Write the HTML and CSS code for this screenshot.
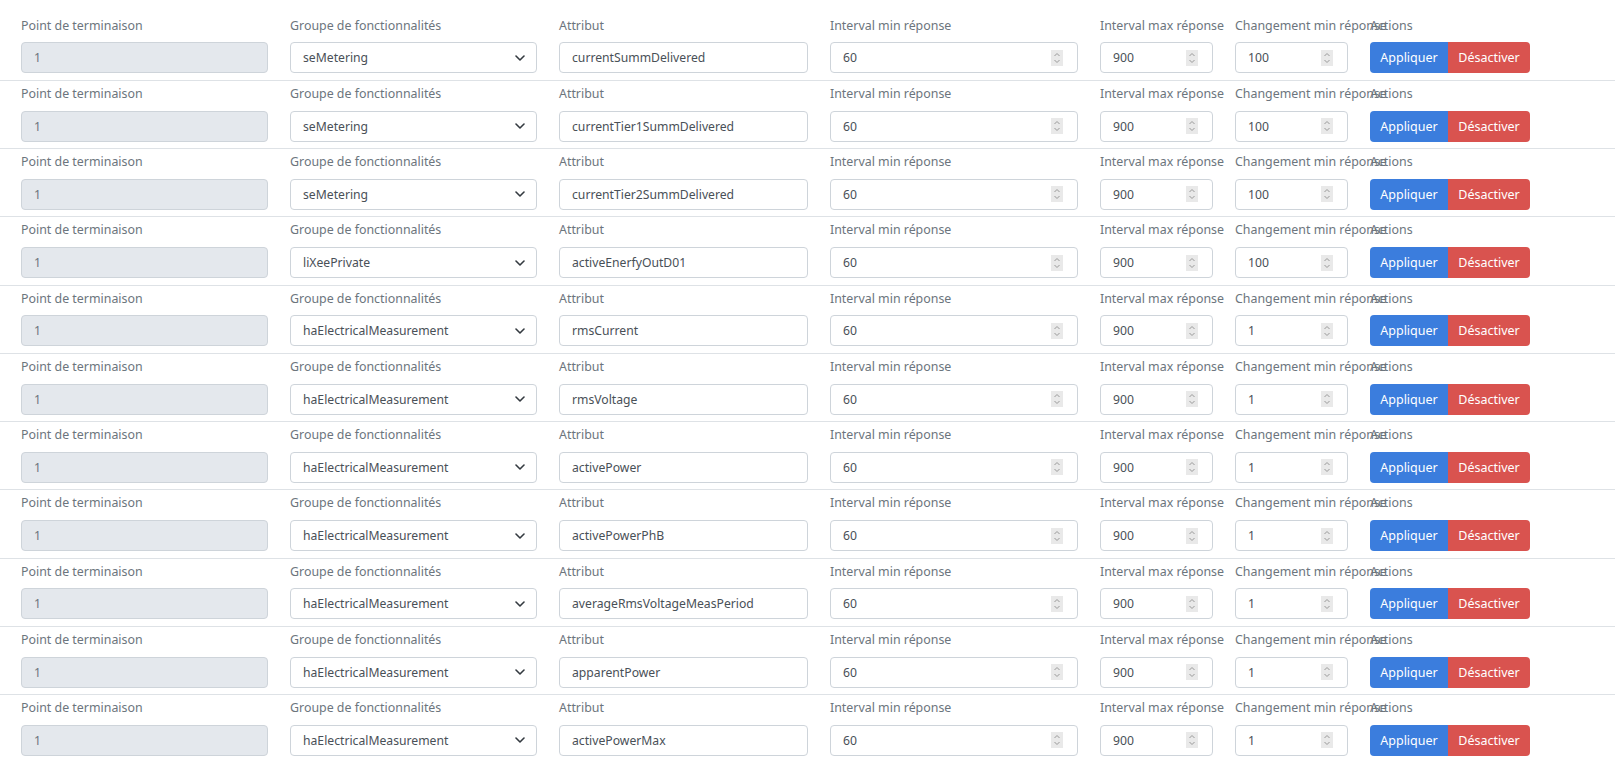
FILE: index.html
```html
<!DOCTYPE html>
<html lang="fr">
<head>
<meta charset="utf-8">
<title>Reporting</title>
<link rel="stylesheet" href="styles.css">
</head>
<body>
<div class="list">

<div class="rep-row">
  <div class="field"><div class="lbl">Point de terminaison</div><div class="ctl disabled">1</div></div>
  <div class="field"><div class="lbl">Groupe de fonctionnalités</div><div class="ctl sel"><span>seMetering</span><svg class="chev" width="10" height="6" viewBox="0 0 10 6"><path d="M1 1 L5 5 L9 1" fill="none" stroke="#343a40" stroke-width="1.6" stroke-linecap="round" stroke-linejoin="round"/></svg></div></div>
  <div class="field"><div class="lbl">Attribut</div><div class="ctl">currentSummDelivered</div></div>
  <div class="field"><div class="lbl">Interval min réponse</div><div class="ctl num"><span>60</span><svg class="spin" width="12" height="16" viewBox="0 0 12 16"><rect width="12" height="16" fill="#e9e9e9"/><path d="M3.5 6 L6 3.5 L8.5 6 M3.5 10 L6 12.5 L8.5 10" fill="none" stroke="#999" stroke-width="1"/></svg></div></div>
  <div class="field"><div class="lbl">Interval max réponse</div><div class="ctl num"><span>900</span><svg class="spin" width="12" height="16" viewBox="0 0 12 16"><rect width="12" height="16" fill="#e9e9e9"/><path d="M3.5 6 L6 3.5 L8.5 6 M3.5 10 L6 12.5 L8.5 10" fill="none" stroke="#999" stroke-width="1"/></svg></div></div>
  <div class="field"><div class="lbl">Changement min réponse</div><div class="ctl num"><span>100</span><svg class="spin" width="12" height="16" viewBox="0 0 12 16"><rect width="12" height="16" fill="#e9e9e9"/><path d="M3.5 6 L6 3.5 L8.5 6 M3.5 10 L6 12.5 L8.5 10" fill="none" stroke="#999" stroke-width="1"/></svg></div></div>
  <div class="field"><div class="lbl">Actions</div><div class="btns"><span class="btn apply">Appliquer</span><span class="btn off">Désactiver</span></div></div>
</div>

<div class="rep-row">
  <div class="field"><div class="lbl">Point de terminaison</div><div class="ctl disabled">1</div></div>
  <div class="field"><div class="lbl">Groupe de fonctionnalités</div><div class="ctl sel"><span>seMetering</span><svg class="chev" width="10" height="6" viewBox="0 0 10 6"><path d="M1 1 L5 5 L9 1" fill="none" stroke="#343a40" stroke-width="1.6" stroke-linecap="round" stroke-linejoin="round"/></svg></div></div>
  <div class="field"><div class="lbl">Attribut</div><div class="ctl">currentTier1SummDelivered</div></div>
  <div class="field"><div class="lbl">Interval min réponse</div><div class="ctl num"><span>60</span><svg class="spin" width="12" height="16" viewBox="0 0 12 16"><rect width="12" height="16" fill="#e9e9e9"/><path d="M3.5 6 L6 3.5 L8.5 6 M3.5 10 L6 12.5 L8.5 10" fill="none" stroke="#999" stroke-width="1"/></svg></div></div>
  <div class="field"><div class="lbl">Interval max réponse</div><div class="ctl num"><span>900</span><svg class="spin" width="12" height="16" viewBox="0 0 12 16"><rect width="12" height="16" fill="#e9e9e9"/><path d="M3.5 6 L6 3.5 L8.5 6 M3.5 10 L6 12.5 L8.5 10" fill="none" stroke="#999" stroke-width="1"/></svg></div></div>
  <div class="field"><div class="lbl">Changement min réponse</div><div class="ctl num"><span>100</span><svg class="spin" width="12" height="16" viewBox="0 0 12 16"><rect width="12" height="16" fill="#e9e9e9"/><path d="M3.5 6 L6 3.5 L8.5 6 M3.5 10 L6 12.5 L8.5 10" fill="none" stroke="#999" stroke-width="1"/></svg></div></div>
  <div class="field"><div class="lbl">Actions</div><div class="btns"><span class="btn apply">Appliquer</span><span class="btn off">Désactiver</span></div></div>
</div>

<div class="rep-row">
  <div class="field"><div class="lbl">Point de terminaison</div><div class="ctl disabled">1</div></div>
  <div class="field"><div class="lbl">Groupe de fonctionnalités</div><div class="ctl sel"><span>seMetering</span><svg class="chev" width="10" height="6" viewBox="0 0 10 6"><path d="M1 1 L5 5 L9 1" fill="none" stroke="#343a40" stroke-width="1.6" stroke-linecap="round" stroke-linejoin="round"/></svg></div></div>
  <div class="field"><div class="lbl">Attribut</div><div class="ctl">currentTier2SummDelivered</div></div>
  <div class="field"><div class="lbl">Interval min réponse</div><div class="ctl num"><span>60</span><svg class="spin" width="12" height="16" viewBox="0 0 12 16"><rect width="12" height="16" fill="#e9e9e9"/><path d="M3.5 6 L6 3.5 L8.5 6 M3.5 10 L6 12.5 L8.5 10" fill="none" stroke="#999" stroke-width="1"/></svg></div></div>
  <div class="field"><div class="lbl">Interval max réponse</div><div class="ctl num"><span>900</span><svg class="spin" width="12" height="16" viewBox="0 0 12 16"><rect width="12" height="16" fill="#e9e9e9"/><path d="M3.5 6 L6 3.5 L8.5 6 M3.5 10 L6 12.5 L8.5 10" fill="none" stroke="#999" stroke-width="1"/></svg></div></div>
  <div class="field"><div class="lbl">Changement min réponse</div><div class="ctl num"><span>100</span><svg class="spin" width="12" height="16" viewBox="0 0 12 16"><rect width="12" height="16" fill="#e9e9e9"/><path d="M3.5 6 L6 3.5 L8.5 6 M3.5 10 L6 12.5 L8.5 10" fill="none" stroke="#999" stroke-width="1"/></svg></div></div>
  <div class="field"><div class="lbl">Actions</div><div class="btns"><span class="btn apply">Appliquer</span><span class="btn off">Désactiver</span></div></div>
</div>

<div class="rep-row">
  <div class="field"><div class="lbl">Point de terminaison</div><div class="ctl disabled">1</div></div>
  <div class="field"><div class="lbl">Groupe de fonctionnalités</div><div class="ctl sel"><span>liXeePrivate</span><svg class="chev" width="10" height="6" viewBox="0 0 10 6"><path d="M1 1 L5 5 L9 1" fill="none" stroke="#343a40" stroke-width="1.6" stroke-linecap="round" stroke-linejoin="round"/></svg></div></div>
  <div class="field"><div class="lbl">Attribut</div><div class="ctl">activeEnerfyOutD01</div></div>
  <div class="field"><div class="lbl">Interval min réponse</div><div class="ctl num"><span>60</span><svg class="spin" width="12" height="16" viewBox="0 0 12 16"><rect width="12" height="16" fill="#e9e9e9"/><path d="M3.5 6 L6 3.5 L8.5 6 M3.5 10 L6 12.5 L8.5 10" fill="none" stroke="#999" stroke-width="1"/></svg></div></div>
  <div class="field"><div class="lbl">Interval max réponse</div><div class="ctl num"><span>900</span><svg class="spin" width="12" height="16" viewBox="0 0 12 16"><rect width="12" height="16" fill="#e9e9e9"/><path d="M3.5 6 L6 3.5 L8.5 6 M3.5 10 L6 12.5 L8.5 10" fill="none" stroke="#999" stroke-width="1"/></svg></div></div>
  <div class="field"><div class="lbl">Changement min réponse</div><div class="ctl num"><span>100</span><svg class="spin" width="12" height="16" viewBox="0 0 12 16"><rect width="12" height="16" fill="#e9e9e9"/><path d="M3.5 6 L6 3.5 L8.5 6 M3.5 10 L6 12.5 L8.5 10" fill="none" stroke="#999" stroke-width="1"/></svg></div></div>
  <div class="field"><div class="lbl">Actions</div><div class="btns"><span class="btn apply">Appliquer</span><span class="btn off">Désactiver</span></div></div>
</div>

<div class="rep-row">
  <div class="field"><div class="lbl">Point de terminaison</div><div class="ctl disabled">1</div></div>
  <div class="field"><div class="lbl">Groupe de fonctionnalités</div><div class="ctl sel"><span>haElectricalMeasurement</span><svg class="chev" width="10" height="6" viewBox="0 0 10 6"><path d="M1 1 L5 5 L9 1" fill="none" stroke="#343a40" stroke-width="1.6" stroke-linecap="round" stroke-linejoin="round"/></svg></div></div>
  <div class="field"><div class="lbl">Attribut</div><div class="ctl">rmsCurrent</div></div>
  <div class="field"><div class="lbl">Interval min réponse</div><div class="ctl num"><span>60</span><svg class="spin" width="12" height="16" viewBox="0 0 12 16"><rect width="12" height="16" fill="#e9e9e9"/><path d="M3.5 6 L6 3.5 L8.5 6 M3.5 10 L6 12.5 L8.5 10" fill="none" stroke="#999" stroke-width="1"/></svg></div></div>
  <div class="field"><div class="lbl">Interval max réponse</div><div class="ctl num"><span>900</span><svg class="spin" width="12" height="16" viewBox="0 0 12 16"><rect width="12" height="16" fill="#e9e9e9"/><path d="M3.5 6 L6 3.5 L8.5 6 M3.5 10 L6 12.5 L8.5 10" fill="none" stroke="#999" stroke-width="1"/></svg></div></div>
  <div class="field"><div class="lbl">Changement min réponse</div><div class="ctl num"><span>1</span><svg class="spin" width="12" height="16" viewBox="0 0 12 16"><rect width="12" height="16" fill="#e9e9e9"/><path d="M3.5 6 L6 3.5 L8.5 6 M3.5 10 L6 12.5 L8.5 10" fill="none" stroke="#999" stroke-width="1"/></svg></div></div>
  <div class="field"><div class="lbl">Actions</div><div class="btns"><span class="btn apply">Appliquer</span><span class="btn off">Désactiver</span></div></div>
</div>

<div class="rep-row">
  <div class="field"><div class="lbl">Point de terminaison</div><div class="ctl disabled">1</div></div>
  <div class="field"><div class="lbl">Groupe de fonctionnalités</div><div class="ctl sel"><span>haElectricalMeasurement</span><svg class="chev" width="10" height="6" viewBox="0 0 10 6"><path d="M1 1 L5 5 L9 1" fill="none" stroke="#343a40" stroke-width="1.6" stroke-linecap="round" stroke-linejoin="round"/></svg></div></div>
  <div class="field"><div class="lbl">Attribut</div><div class="ctl">rmsVoltage</div></div>
  <div class="field"><div class="lbl">Interval min réponse</div><div class="ctl num"><span>60</span><svg class="spin" width="12" height="16" viewBox="0 0 12 16"><rect width="12" height="16" fill="#e9e9e9"/><path d="M3.5 6 L6 3.5 L8.5 6 M3.5 10 L6 12.5 L8.5 10" fill="none" stroke="#999" stroke-width="1"/></svg></div></div>
  <div class="field"><div class="lbl">Interval max réponse</div><div class="ctl num"><span>900</span><svg class="spin" width="12" height="16" viewBox="0 0 12 16"><rect width="12" height="16" fill="#e9e9e9"/><path d="M3.5 6 L6 3.5 L8.5 6 M3.5 10 L6 12.5 L8.5 10" fill="none" stroke="#999" stroke-width="1"/></svg></div></div>
  <div class="field"><div class="lbl">Changement min réponse</div><div class="ctl num"><span>1</span><svg class="spin" width="12" height="16" viewBox="0 0 12 16"><rect width="12" height="16" fill="#e9e9e9"/><path d="M3.5 6 L6 3.5 L8.5 6 M3.5 10 L6 12.5 L8.5 10" fill="none" stroke="#999" stroke-width="1"/></svg></div></div>
  <div class="field"><div class="lbl">Actions</div><div class="btns"><span class="btn apply">Appliquer</span><span class="btn off">Désactiver</span></div></div>
</div>

<div class="rep-row">
  <div class="field"><div class="lbl">Point de terminaison</div><div class="ctl disabled">1</div></div>
  <div class="field"><div class="lbl">Groupe de fonctionnalités</div><div class="ctl sel"><span>haElectricalMeasurement</span><svg class="chev" width="10" height="6" viewBox="0 0 10 6"><path d="M1 1 L5 5 L9 1" fill="none" stroke="#343a40" stroke-width="1.6" stroke-linecap="round" stroke-linejoin="round"/></svg></div></div>
  <div class="field"><div class="lbl">Attribut</div><div class="ctl">activePower</div></div>
  <div class="field"><div class="lbl">Interval min réponse</div><div class="ctl num"><span>60</span><svg class="spin" width="12" height="16" viewBox="0 0 12 16"><rect width="12" height="16" fill="#e9e9e9"/><path d="M3.5 6 L6 3.5 L8.5 6 M3.5 10 L6 12.5 L8.5 10" fill="none" stroke="#999" stroke-width="1"/></svg></div></div>
  <div class="field"><div class="lbl">Interval max réponse</div><div class="ctl num"><span>900</span><svg class="spin" width="12" height="16" viewBox="0 0 12 16"><rect width="12" height="16" fill="#e9e9e9"/><path d="M3.5 6 L6 3.5 L8.5 6 M3.5 10 L6 12.5 L8.5 10" fill="none" stroke="#999" stroke-width="1"/></svg></div></div>
  <div class="field"><div class="lbl">Changement min réponse</div><div class="ctl num"><span>1</span><svg class="spin" width="12" height="16" viewBox="0 0 12 16"><rect width="12" height="16" fill="#e9e9e9"/><path d="M3.5 6 L6 3.5 L8.5 6 M3.5 10 L6 12.5 L8.5 10" fill="none" stroke="#999" stroke-width="1"/></svg></div></div>
  <div class="field"><div class="lbl">Actions</div><div class="btns"><span class="btn apply">Appliquer</span><span class="btn off">Désactiver</span></div></div>
</div>

<div class="rep-row">
  <div class="field"><div class="lbl">Point de terminaison</div><div class="ctl disabled">1</div></div>
  <div class="field"><div class="lbl">Groupe de fonctionnalités</div><div class="ctl sel"><span>haElectricalMeasurement</span><svg class="chev" width="10" height="6" viewBox="0 0 10 6"><path d="M1 1 L5 5 L9 1" fill="none" stroke="#343a40" stroke-width="1.6" stroke-linecap="round" stroke-linejoin="round"/></svg></div></div>
  <div class="field"><div class="lbl">Attribut</div><div class="ctl">activePowerPhB</div></div>
  <div class="field"><div class="lbl">Interval min réponse</div><div class="ctl num"><span>60</span><svg class="spin" width="12" height="16" viewBox="0 0 12 16"><rect width="12" height="16" fill="#e9e9e9"/><path d="M3.5 6 L6 3.5 L8.5 6 M3.5 10 L6 12.5 L8.5 10" fill="none" stroke="#999" stroke-width="1"/></svg></div></div>
  <div class="field"><div class="lbl">Interval max réponse</div><div class="ctl num"><span>900</span><svg class="spin" width="12" height="16" viewBox="0 0 12 16"><rect width="12" height="16" fill="#e9e9e9"/><path d="M3.5 6 L6 3.5 L8.5 6 M3.5 10 L6 12.5 L8.5 10" fill="none" stroke="#999" stroke-width="1"/></svg></div></div>
  <div class="field"><div class="lbl">Changement min réponse</div><div class="ctl num"><span>1</span><svg class="spin" width="12" height="16" viewBox="0 0 12 16"><rect width="12" height="16" fill="#e9e9e9"/><path d="M3.5 6 L6 3.5 L8.5 6 M3.5 10 L6 12.5 L8.5 10" fill="none" stroke="#999" stroke-width="1"/></svg></div></div>
  <div class="field"><div class="lbl">Actions</div><div class="btns"><span class="btn apply">Appliquer</span><span class="btn off">Désactiver</span></div></div>
</div>

<div class="rep-row">
  <div class="field"><div class="lbl">Point de terminaison</div><div class="ctl disabled">1</div></div>
  <div class="field"><div class="lbl">Groupe de fonctionnalités</div><div class="ctl sel"><span>haElectricalMeasurement</span><svg class="chev" width="10" height="6" viewBox="0 0 10 6"><path d="M1 1 L5 5 L9 1" fill="none" stroke="#343a40" stroke-width="1.6" stroke-linecap="round" stroke-linejoin="round"/></svg></div></div>
  <div class="field"><div class="lbl">Attribut</div><div class="ctl">averageRmsVoltageMeasPeriod</div></div>
  <div class="field"><div class="lbl">Interval min réponse</div><div class="ctl num"><span>60</span><svg class="spin" width="12" height="16" viewBox="0 0 12 16"><rect width="12" height="16" fill="#e9e9e9"/><path d="M3.5 6 L6 3.5 L8.5 6 M3.5 10 L6 12.5 L8.5 10" fill="none" stroke="#999" stroke-width="1"/></svg></div></div>
  <div class="field"><div class="lbl">Interval max réponse</div><div class="ctl num"><span>900</span><svg class="spin" width="12" height="16" viewBox="0 0 12 16"><rect width="12" height="16" fill="#e9e9e9"/><path d="M3.5 6 L6 3.5 L8.5 6 M3.5 10 L6 12.5 L8.5 10" fill="none" stroke="#999" stroke-width="1"/></svg></div></div>
  <div class="field"><div class="lbl">Changement min réponse</div><div class="ctl num"><span>1</span><svg class="spin" width="12" height="16" viewBox="0 0 12 16"><rect width="12" height="16" fill="#e9e9e9"/><path d="M3.5 6 L6 3.5 L8.5 6 M3.5 10 L6 12.5 L8.5 10" fill="none" stroke="#999" stroke-width="1"/></svg></div></div>
  <div class="field"><div class="lbl">Actions</div><div class="btns"><span class="btn apply">Appliquer</span><span class="btn off">Désactiver</span></div></div>
</div>

<div class="rep-row">
  <div class="field"><div class="lbl">Point de terminaison</div><div class="ctl disabled">1</div></div>
  <div class="field"><div class="lbl">Groupe de fonctionnalités</div><div class="ctl sel"><span>haElectricalMeasurement</span><svg class="chev" width="10" height="6" viewBox="0 0 10 6"><path d="M1 1 L5 5 L9 1" fill="none" stroke="#343a40" stroke-width="1.6" stroke-linecap="round" stroke-linejoin="round"/></svg></div></div>
  <div class="field"><div class="lbl">Attribut</div><div class="ctl">apparentPower</div></div>
  <div class="field"><div class="lbl">Interval min réponse</div><div class="ctl num"><span>60</span><svg class="spin" width="12" height="16" viewBox="0 0 12 16"><rect width="12" height="16" fill="#e9e9e9"/><path d="M3.5 6 L6 3.5 L8.5 6 M3.5 10 L6 12.5 L8.5 10" fill="none" stroke="#999" stroke-width="1"/></svg></div></div>
  <div class="field"><div class="lbl">Interval max réponse</div><div class="ctl num"><span>900</span><svg class="spin" width="12" height="16" viewBox="0 0 12 16"><rect width="12" height="16" fill="#e9e9e9"/><path d="M3.5 6 L6 3.5 L8.5 6 M3.5 10 L6 12.5 L8.5 10" fill="none" stroke="#999" stroke-width="1"/></svg></div></div>
  <div class="field"><div class="lbl">Changement min réponse</div><div class="ctl num"><span>1</span><svg class="spin" width="12" height="16" viewBox="0 0 12 16"><rect width="12" height="16" fill="#e9e9e9"/><path d="M3.5 6 L6 3.5 L8.5 6 M3.5 10 L6 12.5 L8.5 10" fill="none" stroke="#999" stroke-width="1"/></svg></div></div>
  <div class="field"><div class="lbl">Actions</div><div class="btns"><span class="btn apply">Appliquer</span><span class="btn off">Désactiver</span></div></div>
</div>

<div class="rep-row">
  <div class="field"><div class="lbl">Point de terminaison</div><div class="ctl disabled">1</div></div>
  <div class="field"><div class="lbl">Groupe de fonctionnalités</div><div class="ctl sel"><span>haElectricalMeasurement</span><svg class="chev" width="10" height="6" viewBox="0 0 10 6"><path d="M1 1 L5 5 L9 1" fill="none" stroke="#343a40" stroke-width="1.6" stroke-linecap="round" stroke-linejoin="round"/></svg></div></div>
  <div class="field"><div class="lbl">Attribut</div><div class="ctl">activePowerMax</div></div>
  <div class="field"><div class="lbl">Interval min réponse</div><div class="ctl num"><span>60</span><svg class="spin" width="12" height="16" viewBox="0 0 12 16"><rect width="12" height="16" fill="#e9e9e9"/><path d="M3.5 6 L6 3.5 L8.5 6 M3.5 10 L6 12.5 L8.5 10" fill="none" stroke="#999" stroke-width="1"/></svg></div></div>
  <div class="field"><div class="lbl">Interval max réponse</div><div class="ctl num"><span>900</span><svg class="spin" width="12" height="16" viewBox="0 0 12 16"><rect width="12" height="16" fill="#e9e9e9"/><path d="M3.5 6 L6 3.5 L8.5 6 M3.5 10 L6 12.5 L8.5 10" fill="none" stroke="#999" stroke-width="1"/></svg></div></div>
  <div class="field"><div class="lbl">Changement min réponse</div><div class="ctl num"><span>1</span><svg class="spin" width="12" height="16" viewBox="0 0 12 16"><rect width="12" height="16" fill="#e9e9e9"/><path d="M3.5 6 L6 3.5 L8.5 6 M3.5 10 L6 12.5 L8.5 10" fill="none" stroke="#999" stroke-width="1"/></svg></div></div>
  <div class="field"><div class="lbl">Actions</div><div class="btns"><span class="btn apply">Appliquer</span><span class="btn off">Désactiver</span></div></div>
</div>

</div>
</body>
</html>
```

FILE: styles.css
```css
* { box-sizing: border-box; }

html, body {
  margin: 0;
  padding: 0;
  background: #ffffff;
}

body {
  font-family: "Noto Sans", "Open Sans", "Liberation Sans", sans-serif;
  font-size: 12.4px;
  color: #495057;
  overflow: hidden;
}

.list {
  padding-top: 12.75px;
}

.rep-row {
  display: grid;
  grid-template-columns: 247px 247px 249px 248px 113px 113px 1fr;
  column-gap: 22px;
  padding: 3px 0 6.55px 21px;
  border-bottom: 1px solid #dee2e6;
}

.field {
  min-width: 0;
}

.lbl {
  height: 20px;
  line-height: 20px;
  margin-bottom: 6.7px;
  color: #6c757d;
  white-space: nowrap;
  font-size: 12.4px;
}

.ctl {
  height: 31px;
  border: 1px solid #ced4da;
  border-radius: 4px;
  background: #ffffff;
  padding: 0 12px;
  display: flex;
  align-items: center;
  justify-content: space-between;
  white-space: nowrap;
  color: #495057;
  font-size: 12.2px;
}

.ctl.disabled {
  background: #e4e8ed;
  color: #6c757d;
}

.ctl.sel {
  padding-right: 11px;
}

.ctl.num {
  padding-right: 14px;
}

.chev, .spin {
  flex: none;
  display: block;
}

.btns {
  display: flex;
  height: 31px;
}

.btn {
  display: flex;
  align-items: center;
  justify-content: center;
  height: 31px;
  color: #ffffff;
  font-size: 12.5px;
  white-space: nowrap;
}

.btn.apply {
  width: 78px;
  background: #3b7ddd;
  border-radius: 4px 0 0 4px;
}

.btn.off {
  width: 82px;
  background: #d9534f;
  border-radius: 0 4px 4px 0;
}
```
